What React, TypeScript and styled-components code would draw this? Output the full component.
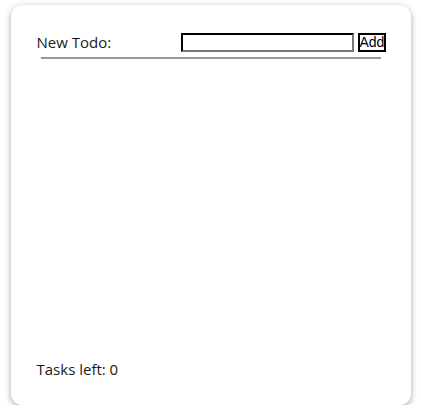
import React from "react";
import styled, { createGlobalStyle } from "styled-components";

const Global = createGlobalStyle`
  html, body { margin: 0; padding: 0; background: #fff; }
  body { font-family: "Open Sans", "Noto Sans", sans-serif; color: #1a1a1a; }
`;

const Page = styled.div`
  display: flex;
  justify-content: center;
  padding-top: 5px;
`;

const Card = styled.div`
  width: 400px;
  height: 400px;
  box-sizing: border-box;
  background: #fff;
  border-radius: 11px;
  box-shadow: 0 2px 6px rgba(0, 0, 0, 0.35);
  padding: 27px 25px 26px 26px;
  display: flex;
  flex-direction: column;
`;

const Header = styled.div`
  display: flex;
  align-items: center;
  justify-content: space-between;
  height: 20px;
`;

const Label = styled.span`
  font-size: 15px;
  line-height: 20px;
`;

const Form = styled.div`
  display: flex;
  align-items: center;
  gap: 4px;
`;

const Input = styled.input`
  width: 173px;
  height: 19px;
  box-sizing: border-box;
  border: 2px inset #767676;
  border-top-color: #222;
  border-left-color: #222;
  border-right-color: #777;
  border-bottom-color: #777;
  padding: 0 2px;
  margin: 0;
  font: 13px "Liberation Sans", Arial, sans-serif;
`;

const Button = styled.button`
  width: 28px;
  height: 19px;
  box-sizing: border-box;
  border: 2px solid #000;
  background: #fff;
  padding: 0;
  margin: 0;
  font: 14px "Liberation Sans", Arial, sans-serif;
  color: #000;
  line-height: 15px;
  overflow: hidden;
`;

const Divider = styled.hr`
  border: none;
  border-top: 2px solid #999;
  height: 0;
  margin: 5px 5px 0 4px;
`;

const List = styled.ul`
  flex: 1;
  list-style: none;
  margin: 0;
  padding: 0;
`;

const Footer = styled.div`
  font-size: 15px;
  line-height: 20px;
`;

export default function App() {
  return (
    <>
      <Global />
      <Page>
        <Card>
          <Header>
            <Label>New Todo:</Label>
            <Form>
              <Input type="text" />
              <Button>Add</Button>
            </Form>
          </Header>
          <Divider />
          <List />
          <Footer>Tasks left: 0</Footer>
        </Card>
      </Page>
    </>
  );
}
